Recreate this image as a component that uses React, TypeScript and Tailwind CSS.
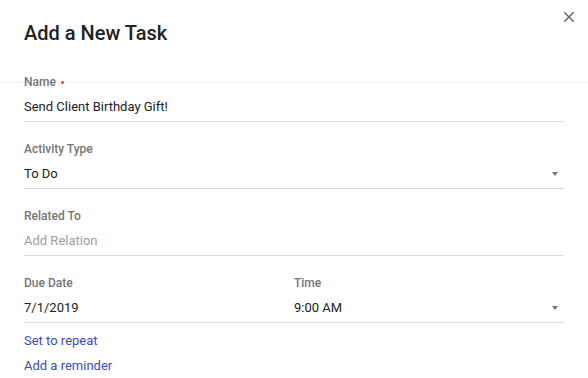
import type { ReactNode } from 'react';

function Caret() {
  return (
    <span className="mr-[6px] h-0 w-0 border-x-[3.5px] border-t-[4px] border-x-transparent border-t-[#757575]" />
  );
}

function Field({ label, required, children, className = '' }: { label: string; required?: boolean; children: ReactNode; className?: string }) {
  return (
    <div className={className}>
      <div className="flex h-4 items-center text-[12px] leading-4 font-medium text-[#757575]">
        {label}
        {required && <span className="ml-[5px] h-[3px] w-[3px] rounded-full bg-[#e53935]" />}
      </div>
      <div className="mt-[7px] flex h-5 items-center justify-between text-[13px] leading-5 text-[#212121]">
        {children}
      </div>
    </div>
  );
}

export default function App() {
  return (
    <div className="relative h-[378px] w-[588px] overflow-hidden bg-white font-['Roboto',sans-serif]">
      {/* Header */}
      <div className="h-[74px] px-6 pt-[21px]">
        <h1 className="text-[20px] leading-6 font-medium text-[#212121]">Add a New Task</h1>
      </div>
      <button className="absolute top-[8px] right-[10px] h-[18px] w-[18px] text-[#666]">
        <svg viewBox="0 0 24 24" className="h-full w-full" fill="currentColor">
          <path d="M19 6.41L17.59 5 12 10.59 6.41 5 5 6.41 10.59 12 5 17.59 6.41 19 12 13.41 17.59 19 19 17.59 13.41 12z" />
        </svg>
      </button>

      {/* Form */}
      <div className="bg-[linear-gradient(to_bottom,transparent_7px,#f7f7f7_7px,#f7f7f7_9px,transparent_9px)] px-6">
        <Field label="Name" required className="border-b border-[#dadada] pb-1">
          <span>Send Client Birthday Gift!</span>
        </Field>
        <Field label="Activity Type" className="mt-[19px] border-b border-[#dadada] pb-1">
          <span>To Do</span>
          <Caret />
        </Field>
        <Field label="Related To" className="mt-[19px] border-b border-[#dadada] pb-1">
          <span className="text-[#9e9e9e]">Add Relation</span>
        </Field>
        <div className="mt-[19px] grid grid-cols-2 border-b border-[#dadada] pb-1">
          <Field label="Due Date">
            <span>7/1/2019</span>
          </Field>
          <Field label="Time">
            <span>9:00 AM</span>
            <Caret />
          </Field>
        </div>

        <div className="mt-2 flex flex-col items-start gap-[5px] text-[13px] leading-5 text-[#3c4bbd]">
          <a>Set to repeat</a>
          <a>Add a reminder</a>
        </div>
      </div>
    </div>
  );
}
